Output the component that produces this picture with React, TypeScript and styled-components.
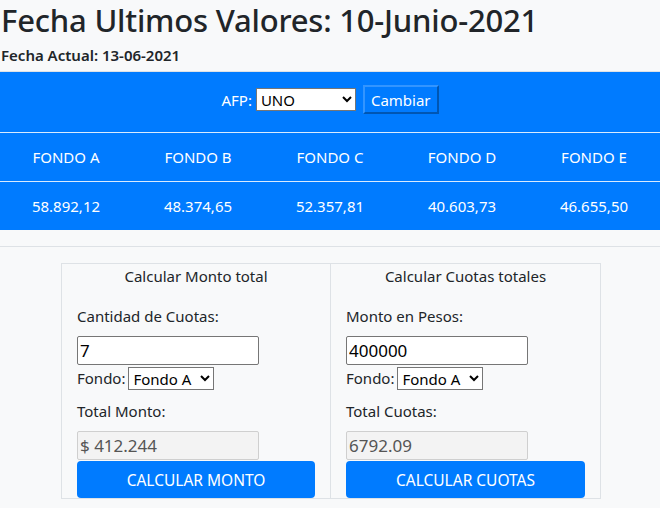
import React from "react";
import styled, { createGlobalStyle } from "styled-components";

const Global = createGlobalStyle`
  html, body { margin: 0; padding: 0; background: #f8f9fa; }
  body { font-family: "Noto Sans", "Open Sans", sans-serif; color: #212529; }
`;

const Page = styled.div`
  display: flex;
  flex-direction: column;
`;

const Header = styled.header`
  padding: 0 1px;
`;

const Title = styled.h1`
  margin: 0;
  font-size: 31px;
  letter-spacing: -0.2px;
  font-weight: 500;
  line-height: 40px;
  color: #212529;
`;

const SubTitle = styled.h6`
  margin: 0;
  font-size: 15px;
  font-weight: 600;
  line-height: 31px;
  color: #212529;
`;

const Band = styled.section`
  background: #007bff;
  border-top: 1px solid #dee2e6;
  color: #fff;
`;

const AfpForm = styled.form`
  box-sizing: border-box;
  display: flex;
  justify-content: center;
  align-items: center;
  gap: 4px;
  height: 60px;
  padding-bottom: 5px;
  font-size: 15px;
`;

const AfpSelect = styled.select`
  width: 100px;
  height: 23px;
  font-family: inherit;
  font-size: 15px;
  color: #000;
  background: #fff;
  border: 1px solid #767676;
  border-radius: 0;
  margin-right: 3px;
`;

const ChangeButton = styled.button`
  height: 29px;
  padding: 0 6px;
  background: #007bff;
  color: #fff;
  font-family: inherit;
  font-size: 15px;
  border: 2px solid;
  border-color: #3395ff #0056b3 #0056b3 #3395ff;
`;

const Table = styled.div`
  display: grid;
  grid-template-columns: repeat(5, 1fr);
`;

const Cell = styled.div`
  height: 48px;
  display: flex;
  align-items: center;
  justify-content: center;
  border-top: 1px solid rgba(255, 255, 255, 0.85);
  font-size: 15px;
`;

const Divider = styled.hr`
  margin: 16px 0 16px;
  border: 0;
  border-top: 1px solid #dee2e6;
`;

const Calculators = styled.div`
  display: grid;
  grid-template-columns: 270px 270px;
  width: 540px;
  margin: 0 59px 0 61px;
`;

const Card = styled.div`
  border: 1px solid #dee2e6;
  padding: 0 15px;
  display: flex;
  flex-direction: column;
  align-items: flex-start;
  font-size: 15px;
  & + & { border-left: 0; }
`;

const CardTitle = styled.div`
  align-self: stretch;
  text-align: center;
  line-height: 24px;
  margin-bottom: 8px;
`;

const Label = styled.label`
  line-height: 24px;
  margin-top: 8px;
  margin-bottom: 8px;
`;

const TextInput = styled.input`
  box-sizing: border-box;
  width: 182px;
  height: 29px;
  padding: 0 2px;
  font-family: inherit;
  font-size: 17px;
  color: #000;
  background: #fff;
  border: 1px solid #767676;
  border-radius: 2px;
  margin: 0;
  &:disabled {
    background: #f3f3f3;
    border-color: #cfcfcf;
    color: #555;
  }
`;

const FondoRow = styled.div`
  display: flex;
  align-items: center;
  gap: 3px;
  height: 26px;
`;

const FondoSelect = styled.select`
  height: 23px;
  width: 86px;
  font-family: inherit;
  font-size: 15px;
  color: #000;
  background: #fff;
  border: 1px solid #767676;
  border-radius: 0;
`;

const CalcButton = styled.button`
  align-self: stretch;
  height: 37px;
  margin-top: 1px;
  background: #007bff;
  color: #fff;
  border: 0;
  border-radius: 4px;
  font-family: inherit;
  font-size: 15.5px;
  text-transform: uppercase;
`;

const fondos = ["A", "B", "C", "D", "E"];
const valores = ["58.892,12", "48.374,65", "52.357,81", "40.603,73", "46.655,50"];

function Calculator(props: {
  title: string;
  label: string;
  value: string;
  totalLabel: string;
  total: string;
  action: string;
}) {
  return (
    <Card>
      <CardTitle>{props.title}</CardTitle>
      <Label>{props.label}</Label>
      <TextInput defaultValue={props.value} />
      <FondoRow>
        <span>Fondo:</span>
        <FondoSelect defaultValue="A">
          {fondos.map((f) => (
            <option key={f} value={f}>Fondo {f}</option>
          ))}
        </FondoSelect>
      </FondoRow>
      <Label>{props.totalLabel}</Label>
      <TextInput disabled value={props.total} readOnly />
      <CalcButton type="button">{props.action}</CalcButton>
    </Card>
  );
}

export default function App() {
  return (
    <Page>
      <Global />
      <Header>
        <Title>Fecha Ultimos Valores: 10-Junio-2021</Title>
        <SubTitle>Fecha Actual: 13-06-2021</SubTitle>
      </Header>
      <Band>
        <AfpForm onSubmit={(e) => e.preventDefault()}>
          <span>AFP:</span>
          <AfpSelect defaultValue="UNO">
            <option>UNO</option>
            <option>CAPITAL</option>
            <option>CUPRUM</option>
            <option>HABITAT</option>
            <option>MODELO</option>
            <option>PLANVITAL</option>
            <option>PROVIDA</option>
          </AfpSelect>
          <ChangeButton type="submit">Cambiar</ChangeButton>
        </AfpForm>
        <Table>
          {fondos.map((f) => (
            <Cell key={f}>FONDO {f}</Cell>
          ))}
          {valores.map((v) => (
            <Cell key={v}>{v}</Cell>
          ))}
        </Table>
      </Band>
      <Divider />
      <Calculators>
        <Calculator
          title="Calcular Monto total"
          label="Cantidad de Cuotas:"
          value="7"
          totalLabel="Total Monto:"
          total="$ 412.244"
          action="Calcular Monto"
        />
        <Calculator
          title="Calcular Cuotas totales"
          label="Monto en Pesos:"
          value="400000"
          totalLabel="Total Cuotas:"
          total="6792.09"
          action="Calcular Cuotas"
        />
      </Calculators>
    </Page>
  );
}
